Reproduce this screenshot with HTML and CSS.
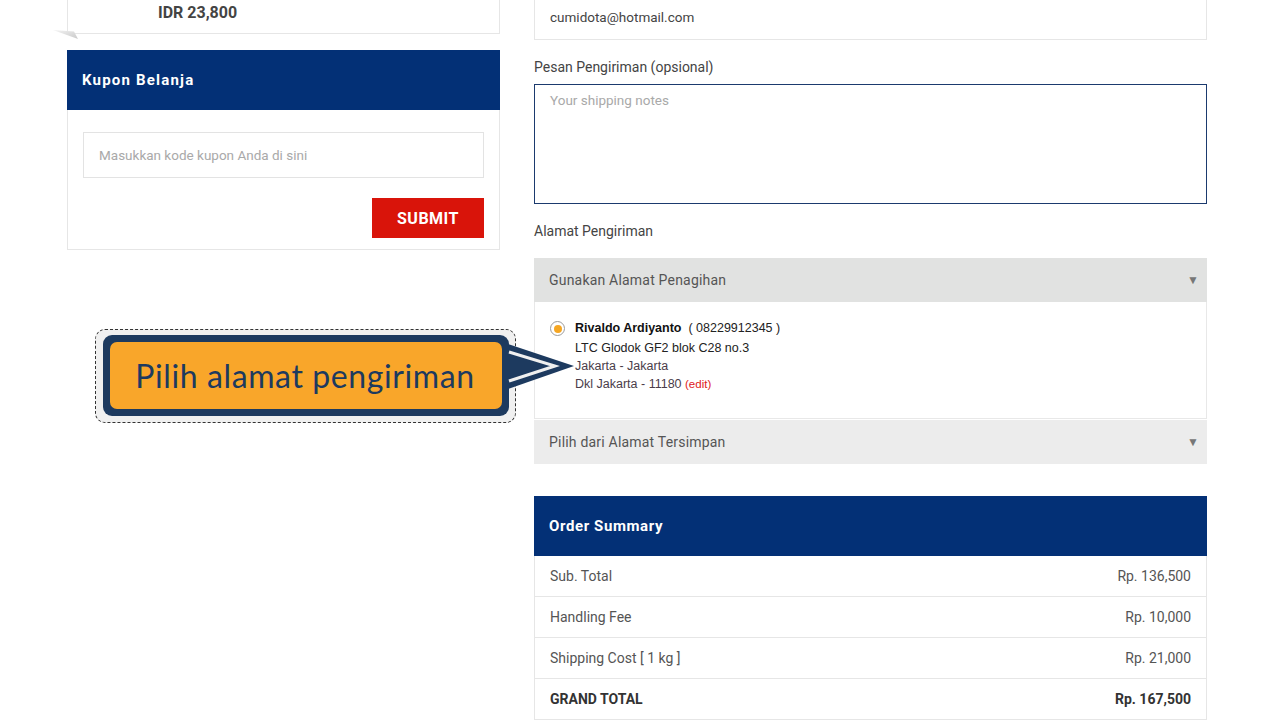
FILE: index.html
```html
<!DOCTYPE html>
<html lang="id">
<head>
<meta charset="utf-8">
<title>Checkout</title>
<link rel="stylesheet" href="styles.css">
</head>
<body>
<div class="page">
  <div class="col-left">
    <div class="price-card">
      <span class="price">IDR 23,800</span>
      <svg class="fold" width="30" height="12" viewBox="0 0 30 12">
        <defs>
          <linearGradient id="fg" x1="0" y1="0" x2="1" y2="1">
            <stop offset="0" stop-color="#f4f4f4"/>
            <stop offset="1" stop-color="#c9c9c9"/>
          </linearGradient>
        </defs>
        <polygon points="0,1 21,2.5 25,10" fill="url(#fg)"/>
      </svg>
    </div>
    <div class="coupon">
      <div class="panel-head head-wide">Kupon Belanja</div>
      <div class="coupon-body">
        <input class="field" type="text" placeholder="Masukkan kode kupon Anda di sini">
        <div class="btn-row"><button class="submit">SUBMIT</button></div>
      </div>
    </div>
  </div>

  <div class="col-right">
    <div class="email-box">cumidota@hotmail.com</div>
    <div class="label label-first">Pesan Pengiriman (opsional)</div>
    <textarea class="notes" placeholder="Your shipping notes"></textarea>
    <div class="label label-second">Alamat Pengiriman</div>
    <div class="select select-dark"><span>Gunakan Alamat Penagihan</span><span class="caret">&#9660;</span></div>
    <div class="address">
      <span class="radio"><span class="dot"></span></span>
      <div class="addr-lines">
        <div class="addr-name"><b>Rivaldo Ardiyanto</b>&nbsp; ( 08229912345 )</div>
        <div class="addr-street">LTC Glodok GF2 blok C28 no.3</div>
        <div class="addr-city">Jakarta - Jakarta</div>
        <div class="addr-city">Dkl Jakarta - 11180 <span class="edit">(edit)</span></div>
      </div>
    </div>
    <div class="select select-light"><span>Pilih dari Alamat Tersimpan</span><span class="caret">&#9660;</span></div>

    <div class="summary">
      <div class="panel-head">Order Summary</div>
      <div class="row"><span>Sub. Total</span><span>Rp. 136,500</span></div>
      <div class="row"><span>Handling Fee</span><span>Rp. 10,000</span></div>
      <div class="row"><span>Shipping Cost [ 1 kg ]</span><span>Rp. 21,000</span></div>
      <div class="row total"><span>GRAND TOTAL</span><span>Rp. 167,500</span></div>
    </div>
  </div>

  <div class="callout">
    <div class="callout-blue">
      <div class="callout-orange">Pilih alamat pengiriman</div>
    </div>
    <svg class="pointer" width="75" height="95" viewBox="0 0 75 95">
      <polygon points="7,15 73,37 7,60" fill="#1d3a5f"/>
      <polyline points="8,23 54,37 8,52" fill="none" stroke="#f0f0f0" stroke-width="3"/>
    </svg>
  </div>
</div>
</body>
</html>
```

FILE: styles.css
```css
* { box-sizing: border-box; }
html, body { margin: 0; padding: 0; background: #fff; }
body {
  font-family: Roboto, "Liberation Sans", Arial, sans-serif;
  color: #555;
  font-size: 14px;
  overflow: hidden;
  height: 720px;
}
.page {
  position: relative;
  display: flex;
  gap: 34px;
  padding-left: 67px;
}
.col-left { width: 433px; flex: none; }
.col-right { width: 673px; flex: none; }

/* left */
.price-card {
  position: relative;
  margin-top: -41px;
  height: 75px;
  border: 1px solid #e6e6e6;
  border-top: none;
  padding: 44px 0 0 90px;
}
.price {
  font-weight: 700;
  font-size: 16px;
  line-height: 20px;
  color: #444;
}
.fold {
  position: absolute;
  left: -15px;
  bottom: -8px;
}
.coupon { margin-top: 16px; }
.panel-head {
  height: 60px;
  background: #033076;
  color: #fff;
  font-weight: 700;
  font-size: 15px;
  letter-spacing: 0.6px;
  padding-left: 15px;
  display: flex;
  align-items: center;
}
.panel-head.head-wide { letter-spacing: 1.2px; }
.coupon-body {
  border: 1px solid #e6e6e6;
  border-top: none;
  padding: 22px 15px 11px;
}
.field {
  display: block;
  width: 100%;
  height: 46px;
  border: 1px solid #e3e3e3;
  padding: 0 15px;
  font-family: inherit;
  font-size: 13.5px;
  color: #555;
  outline: none;
}
.field::placeholder { color: #a9a9a9; }
.btn-row {
  display: flex;
  justify-content: flex-end;
  margin-top: 20px;
}
.submit {
  width: 112px;
  height: 40px;
  border: none;
  background: #d9140a;
  color: #fff;
  font-family: inherit;
  font-weight: 700;
  font-size: 16px;
  letter-spacing: 0.5px;
  padding: 0;
}

/* right */
.email-box {
  margin-top: -7px;
  height: 47px;
  border: 1px solid #e6e6e6;
  padding-left: 15px;
  display: flex;
  align-items: center;
  color: #444;
  font-size: 13.5px;
}
.label {
  line-height: 20px;
  color: #444;
  font-size: 14px;
}
.label-first { margin-top: 17px; }
.notes {
  display: block;
  width: 100%;
  height: 120px;
  margin-top: 7px;
  border: 1px solid #1b3a6e;
  padding: 7px 15px;
  font-family: inherit;
  font-size: 13.5px;
  resize: none;
  outline: none;
}
.notes::placeholder { color: #a9a9a9; }
.label-second { margin-top: 17px; }
.select {
  height: 44px;
  display: flex;
  align-items: center;
  justify-content: space-between;
  padding: 0 8px 0 15px;
  color: #555;
  font-size: 14px;
  letter-spacing: 0.2px;
}
.select-dark { margin-top: 17px; background: #e1e2e1; }
.select-light { background: #ececec; margin-top: 1px; }
.caret { font-size: 12px; color: #777; }

.address {
  display: flex;
  border: 1px solid #e8e8e8;
  border-top: none;
  padding: 17px 0 25px 15px;
  height: 117px;
  font-family: "Liberation Sans", Arial, sans-serif;
  font-size: 12.5px;
}
.radio {
  width: 15px;
  height: 15px;
  border: 1px solid #9a9a9a;
  border-radius: 50%;
  display: flex;
  align-items: center;
  justify-content: center;
  margin-top: 2px;
  margin-right: 10px;
  flex: none;
  background: #fff;
}
.dot {
  width: 8px;
  height: 8px;
  border-radius: 50%;
  background: #f5a623;
}
.addr-lines { line-height: 18px; }
.addr-name { color: #222; margin-bottom: 2px; }
.addr-name b { color: #111; }
.addr-street { color: #222; }
.addr-city { color: #4a3d4a; }
.edit { color: #e0201a; font-size: 11.5px; }

.summary { margin-top: 32px; }
.row {
  height: 41px;
  border: 1px solid #e6e6e6;
  border-top: none;
  display: flex;
  align-items: center;
  justify-content: space-between;
  padding: 0 15px;
  color: #555;
  font-size: 14px;
}
.row.total { font-weight: 700; color: #333; }

/* callout overlay */
.callout {
  position: absolute;
  left: 95px;
  top: 329px;
  width: 421px;
  height: 94px;
  border: 1px dashed #333;
  border-radius: 10px;
  background: #f0f0f0;
  padding: 5px 6px 6px 7px;
}
.callout-blue {
  height: 81px;
  background: #1d3a5f;
  border-radius: 9px;
  padding: 7px;
}
.callout-orange {
  height: 67px;
  background: #f9a62a;
  border-radius: 7px;
  display: flex;
  align-items: center;
  justify-content: center;
  font-family: Lato, "Open Sans", sans-serif;
  font-size: 32px;
  letter-spacing: 0.6px;
  color: #1d3a5f;
  padding-right: 2px;
}
.pointer {
  position: absolute;
  left: 405px;
  top: -1px;
}
```
